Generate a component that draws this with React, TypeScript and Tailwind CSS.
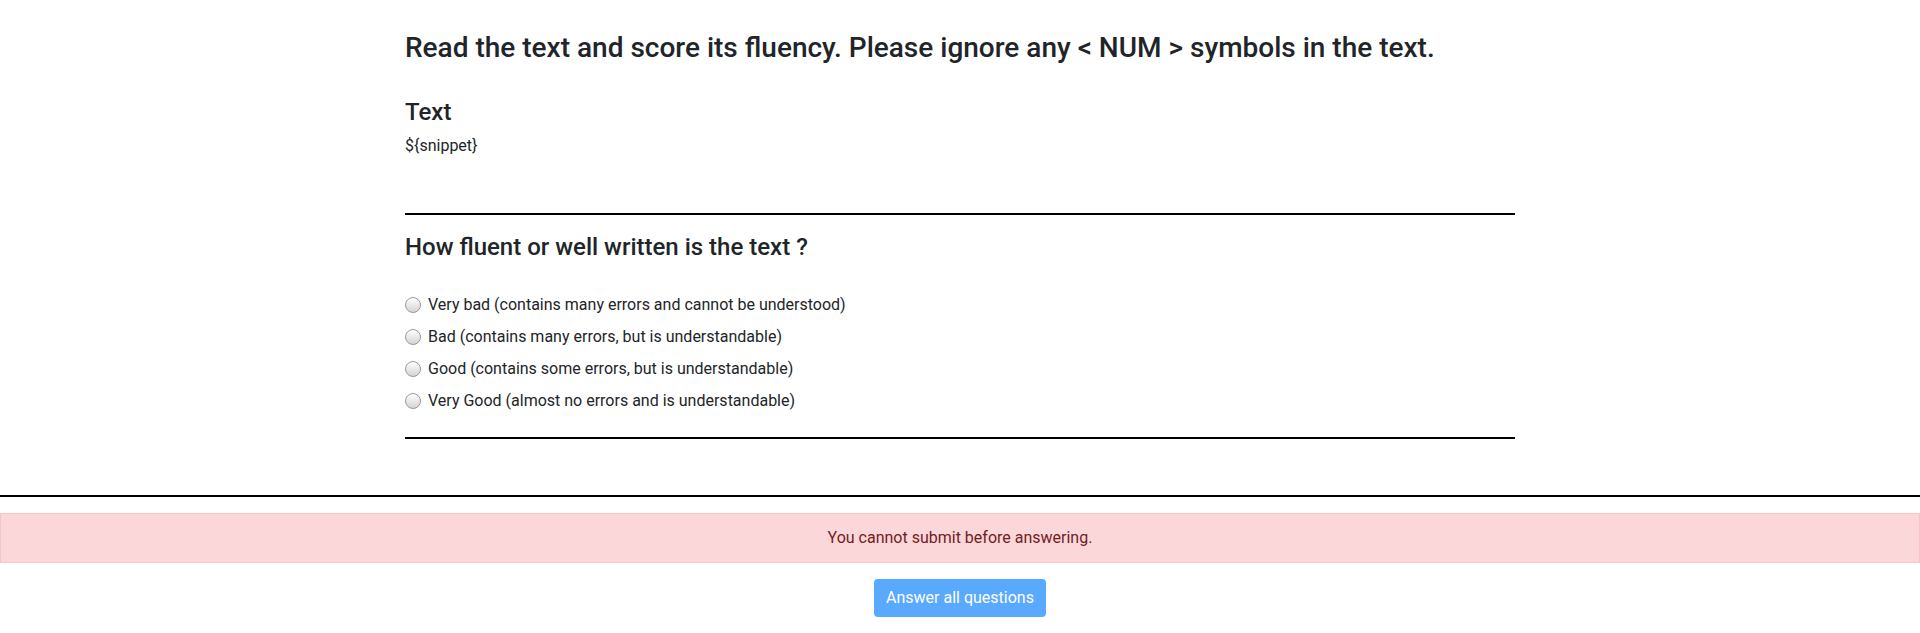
import React from "react";

const options = [
  "Very bad (contains many errors and cannot be understood)",
  "Bad (contains many errors, but is understandable)",
  "Good (contains some errors, but is understandable)",
  "Very Good (almost no errors and is understandable)",
];

function Radio() {
  return (
    <span className="inline-block w-[16px] h-[16px] rounded-full border border-[#999999] bg-gradient-to-b from-[#ffffff] to-[#d4d4d4] shrink-0" />
  );
}

export default function App() {
  return (
    <div className="min-h-[633px] bg-white text-[#212529] font-['Roboto','Liberation_Sans',sans-serif] text-[16px] leading-[24px]">
      <div className="w-[1110px] mx-auto pt-[31px]">
        <h3 className="text-[28px] leading-[34px] font-medium">
          Read the text and score its fluency. Please ignore any &lt; NUM &gt; symbols in the text.
        </h3>
        <h4 className="mt-[33px] text-[24px] leading-[29px] font-medium">Text</h4>
        <p className="mt-[7px]">{"${snippet}"}</p>
        <hr className="mt-[55px] border-0 border-t-2 border-black" />
        <h4 className="mt-[18px] text-[24px] leading-[29px] font-medium">
          How fluent or well written is the text ?
        </h4>
        <div className="mt-[31px] flex flex-col gap-[8px]">
          {options.map((o) => (
            <label key={o} className="flex items-center gap-[7px] h-[24px]">
              <Radio />
              <span>{o}</span>
            </label>
          ))}
        </div>
        <hr className="mt-[24px] border-0 border-t-2 border-black" />
      </div>
      <hr className="mt-[56px] border-0 border-t-2 border-black" />
      <div className="mt-[16px] border border-[#f5c6cb] bg-[#fbd7d9] text-[#721c24] text-center py-[12px] px-[20px]">
        You cannot submit before answering.
      </div>
      <div className="mt-[16px] flex justify-center">
        <button className="h-[38px] px-[12px] rounded-[4px] bg-[#59a9ff] text-white text-[16px] leading-[24px]">
          Answer all questions
        </button>
      </div>
    </div>
  );
}
